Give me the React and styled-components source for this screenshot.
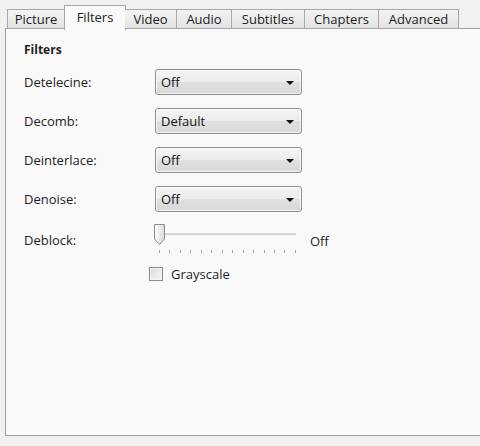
import React from 'react';
import styled, { createGlobalStyle } from 'styled-components';

const GlobalStyle = createGlobalStyle`
  html, body {
    margin: 0;
    padding: 0;
    background: #f0f0f0;
  }
  body {
    font-family: 'Open Sans', 'Noto Sans', sans-serif;
    font-size: 13px;
    color: #1e1e1e;
  }
`;

const tabs = [
  { name: 'Picture', width: 58 },
  { name: 'Filters', width: 62 },
  { name: 'Video', width: 52 },
  { name: 'Audio', width: 55 },
  { name: 'Subtitles', width: 73 },
  { name: 'Chapters', width: 74 },
  { name: 'Advanced', width: 80 },
];

const filters = [
  { label: 'Detelecine:', value: 'Off' },
  { label: 'Decomb:', value: 'Default' },
  { label: 'Deinterlace:', value: 'Off' },
  { label: 'Denoise:', value: 'Off' },
];

const App = () => {
  return (
    <>
      <GlobalStyle />
      <Window>
        <TabStrip>
          {tabs.map((t) => (
            <Tab key={t.name} active={t.name === 'Filters'} $w={t.width}>
              {t.name}
            </Tab>
          ))}
        </TabStrip>
        <Panel>
          <Heading>Filters</Heading>
          {filters.map((f) => (
            <Row key={f.label}>
              <Label>{f.label}</Label>
              <Dropdown>
                <span>{f.value}</span>
                <Arrow />
              </Dropdown>
            </Row>
          ))}
          <SliderRow>
            <Label>Deblock:</Label>
            <Slider>
              <Track />
              <Thumb>
                <svg width="13" height="23" viewBox="0 0 13 23">
                  <defs>
                    <linearGradient id="thumbFill" x1="0" y1="0" x2="1" y2="0">
                      <stop offset="0" stopColor="#fdfdfd" />
                      <stop offset="1" stopColor="#dadada" />
                    </linearGradient>
                  </defs>
                  <path
                    d="M1.5 1.5 H11.5 V16 L6.5 21.5 L1.5 16 Z"
                    fill="url(#thumbFill)"
                    stroke="#8a8a8a"
                    strokeWidth="1"
                    strokeLinejoin="round"
                  />
                </svg>
              </Thumb>
              <Ticks>
                {Array.from({ length: 14 }).map((_, i) => (
                  <Tick key={i} />
                ))}
              </Ticks>
            </Slider>
            <SliderValue>Off</SliderValue>
          </SliderRow>
          <CheckRow>
            <CheckBox />
            <span>Grayscale</span>
          </CheckRow>
        </Panel>
      </Window>
    </>
  );
};

export default App;

const Window = styled.div`
  width: 480px;
  height: 446px;
  overflow: hidden;
  padding: 5px 0 0 5px;
  box-sizing: border-box;
`;

const TabStrip = styled.div`
  display: flex;
  align-items: flex-end;
  height: 24px;
  padding-left: 2px;
  position: relative;
  z-index: 1;
`;

const Tab = styled.div`
  box-sizing: border-box;
  width: ${(p) => p.$w}px;
  flex-shrink: 0;
  text-align: center;
  height: ${(p) => (p.active ? '25px' : '20px')};
  padding-top: ${(p) => (p.active ? '2px' : '0')};
  margin: ${(p) => (p.active ? '0 -1px -1px' : '0')};
  border: 1px solid #a8a8a8;
  border-bottom: ${(p) => (p.active ? 'none' : '1px solid #a8a8a8')};
  border-left-width: ${(p) => (p.active ? '1px' : '0')};
  background: ${(p) =>
    p.active ? '#f9f9f9' : 'linear-gradient(#f4f4f4, #e2e2e2)'};
  font-size: 13px;
  line-height: 18px;
  color: #222;
  white-space: nowrap;
  &:first-child {
    border-left-width: 1px;
  }
`;

const Panel = styled.div`
  width: 500px;
  height: 408px;
  box-sizing: border-box;
  margin-top: -1px;
  border: 1px solid #a0a0a0;
  border-right: none;
  background: #f9f9f9;
  padding: 13px 0 0 18px;
  display: flex;
  flex-direction: column;
`;

const Heading = styled.div`
  font-weight: 700;
  font-size: 12px;
  line-height: 16px;
  margin-bottom: 11px;
`;

const Row = styled.div`
  display: flex;
  align-items: center;
  height: 26px;
  margin-bottom: 13px;
`;

const Label = styled.div`
  width: 131px;
  flex-shrink: 0;
  font-size: 13px;
`;

const Dropdown = styled.div`
  box-sizing: border-box;
  width: 147px;
  height: 26px;
  border: 1px solid #8e8e8e;
  border-radius: 3px;
  background: linear-gradient(#f4f4f4 0%, #ececec 48%, #e0e0e0 52%, #d9d9d9 100%);
  display: flex;
  align-items: center;
  justify-content: space-between;
  padding: 0 7px 0 5px;
  font-size: 13px;
  color: #111;
  box-shadow: inset 0 0 0 1px rgba(255, 255, 255, 0.7);
`;

const Arrow = styled.div`
  width: 0;
  height: 0;
  border-left: 4px solid transparent;
  border-right: 4px solid transparent;
  border-top: 4px solid #111;
  margin-top: 1px;
`;

const SliderRow = styled.div`
  display: flex;
  align-items: center;
  height: 30px;
  margin-bottom: 10px;
`;

const Slider = styled.div`
  position: relative;
  width: 143px;
  height: 30px;
  margin-left: -2px;
`;

const Track = styled.div`
  position: absolute;
  left: 6px;
  right: 0;
  top: 8px;
  height: 2px;
  background: #d6d6d6;
  border-bottom: 1px solid #f4f4f4;
`;

const Thumb = styled.div`
  position: absolute;
  left: 0;
  top: -2px;
  line-height: 0;
`;

const Ticks = styled.div`
  position: absolute;
  left: 6px;
  right: 0;
  top: 25px;
  display: flex;
  justify-content: space-between;
`;

const Tick = styled.div`
  width: 1px;
  height: 3px;
  background: #a8a8a8;
`;

const SliderValue = styled.div`
  margin-left: 14px;
  margin-top: 2px;
  font-size: 13px;
`;

const CheckRow = styled.div`
  display: flex;
  align-items: center;
  gap: 8px;
  margin-left: 125px;
  font-size: 13px;
`;

const CheckBox = styled.div`
  box-sizing: border-box;
  width: 14px;
  height: 14px;
  border: 1px solid #8a8a8a;
  background: linear-gradient(135deg, #dcdcdc, #f6f6f6);
  box-shadow: inset 0 0 0 1px #f4f4f4;
`;
